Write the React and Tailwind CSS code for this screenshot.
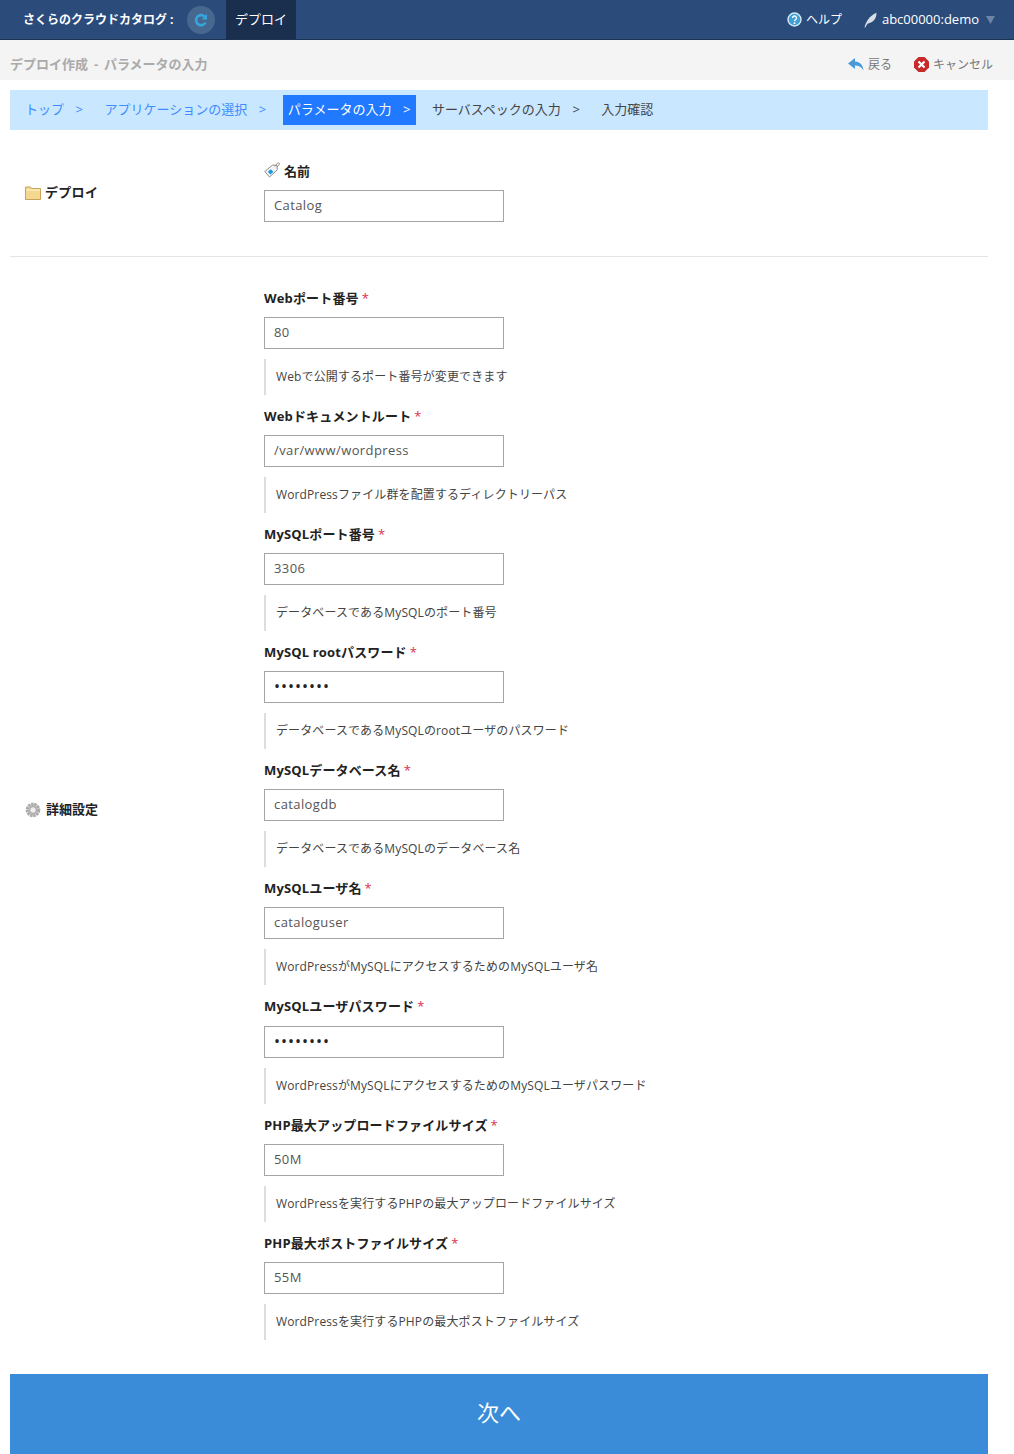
import { useState } from 'react';

const fields = [
  { label: 'Webポート番号', value: '80', help: 'Webで公開するポート番号が変更できます' },
  { label: 'Webドキュメントルート', value: '/var/www/wordpress', help: 'WordPressファイル群を配置するディレクトリーパス' },
  { label: 'MySQLポート番号', value: '3306', help: 'データベースであるMySQLのポート番号' },
  { label: 'MySQL rootパスワード', value: 'password', type: 'password', help: 'データベースであるMySQLのrootユーザのパスワード' },
  { label: 'MySQLデータベース名', value: 'catalogdb', help: 'データベースであるMySQLのデータベース名' },
  { label: 'MySQLユーザ名', value: 'cataloguser', help: 'WordPressがMySQLにアクセスするためのMySQLユーザ名' },
  { label: 'MySQLユーザパスワード', value: 'password', type: 'password', help: 'WordPressがMySQLにアクセスするためのMySQLユーザパスワード' },
  { label: 'PHP最大アップロードファイルサイズ', value: '50M', help: 'WordPressを実行するPHPの最大アップロードファイルサイズ' },
  { label: 'PHP最大ポストファイルサイズ', value: '55M', help: 'WordPressを実行するPHPの最大ポストファイルサイズ' },
];

function Field({ label, value, type = 'text', help }) {
  const [val, setVal] = useState(value);
  return (
    <div className="h-[118.125px]">
      <label className="flex h-[30.125px] items-start pt-[2px] text-[13px] leading-[18px] font-bold tracking-[0.15px] text-[#222]">
        {label}
        <span className="ml-[3px] font-normal text-[#d9304f]">*</span>
      </label>
      <input
        type={type}
        value={val}
        onChange={(e) => setVal(e.target.value)}
        className={`block h-8 w-60 border border-[#a5a5a5] bg-white px-[9px] pb-[2px] outline-none ${
          type === 'password' ? 'text-[16px] tracking-[1px] text-[#222]' : 'text-[13px] tracking-[0.4px] text-[#555]'
        }`}
      />
      <p className="mt-[10px] flex h-9 items-center border-l-2 border-[#ddd] pl-[10px] text-[12px] tracking-[0.12px] text-[#444]">
        {help}
      </p>
    </div>
  );
}

function Crumb({ children, active, link, last }) {
  return (
    <li
      className={`flex h-[30px] items-center px-[5px] ${
        active ? 'bg-[#2079ff] text-white' : link ? 'text-[#3f8bff]' : 'text-[#444]'
      }`}
    >
      {children}
      {!last && <span className="ml-[11px] w-[8.5px] text-center">&gt;</span>}
    </li>
  );
}

export default function App() {
  return (
    <div className="min-h-[1454px] bg-white font-['Open_Sans','Noto_Sans_CJK_JP',sans-serif]">
      {/* top bar */}
      <header className="flex h-10 items-stretch justify-between border-b border-[#1c3353] bg-[#2b4b7b] text-[13px] text-white">
        <div className="flex items-stretch">
          <div className="flex items-center pl-[23px]">
            <span className="w-[164px] text-[12px] font-bold">さくらのクラウドカタログ :</span>
            <span className="flex h-7 w-7 items-center justify-center rounded-full bg-[#47678f]">
              <svg width="16" height="16" viewBox="0 0 16 16" fill="none">
                <path d="M12.5 10.5A5 5 0 1 1 11.5 4.5" stroke="#35a7dc" strokeWidth="2.6" />
                <path d="M14 2v5.5H8.7z" fill="#35a7dc" />
              </svg>
            </span>
          </div>
          <div className="ml-[11px] flex w-[70px] items-center justify-center bg-[#1a2e4e]">デプロイ</div>
        </div>
        <div className="flex items-center pr-[19px]">
          <svg width="15" height="15" viewBox="0 0 15 15">
            <circle cx="7.5" cy="7.5" r="6.5" fill="#3d9fd6" stroke="#d5eaf6" strokeWidth="1.4" />
            <path d="M5.5 6a2 2 0 1 1 3 1.7c-.7.4-1 .8-1 1.6" fill="none" stroke="#fff" strokeWidth="1.4" />
            <circle cx="7.5" cy="11.2" r="0.9" fill="#fff" />
          </svg>
          <span className="ml-1 text-[12px]">ヘルプ</span>
          <svg className="ml-[21px]" width="14" height="16" viewBox="0 0 14 16">
            <path d="M1.5 15.5C3 10 6 4 13.5 .8 13.5 5 12 10 5 11.5 4 12.5 3 14 2.3 15.5z" fill="#d8dee6" />
          </svg>
          <span className="ml-[5px]">abc00000:demo</span>
          <svg className="ml-[7px]" width="9" height="8" viewBox="0 0 9 8">
            <path d="M0 0h9L4.5 8z" fill="#6d84a6" />
          </svg>
        </div>
      </header>

      {/* page title */}
      <div className="flex h-10 items-center justify-between bg-[#f4f4f4] pl-[10px] pr-[21px] pt-[9px]">
        <h1 className="text-[13px] font-bold [word-spacing:2.5px] text-[#aaa]">デプロイ作成 - パラメータの入力</h1>
        <div className="flex items-center text-[12px] text-[#777]">
          <svg width="16" height="13" viewBox="0 0 16 13">
            <path d="M7 0 0 5.5 7 11V7.5c4 0 6.5 1.5 8.5 5C15 7 12 3.5 7 3.5z" fill="#4a9ad9" />
          </svg>
          <span className="ml-[4px]">戻る</span>
          <svg className="ml-[22px]" width="15" height="15" viewBox="0 0 15 15">
            <path d="M4.5 0h6L15 4.5v6L10.5 15h-6L0 10.5v-6z" fill="#c62a2a" />
            <path d="M4.5 4.5l6 6m0-6l-6 6" stroke="#fff" strokeWidth="2.2" />
          </svg>
          <span className="ml-[4px]">キャンセル</span>
        </div>
      </div>

      <main className="px-[10px] pt-[10px]">
        {/* steps */}
        <ol className="flex h-10 w-[978px] items-center gap-[11px] bg-[#c9e7ff] pl-[10px] text-[13px]">
          <Crumb link>トップ</Crumb>
          <Crumb link>アプリケーションの選択</Crumb>
          <Crumb active>パラメータの入力</Crumb>
          <Crumb>サーバスペックの入力</Crumb>
          <Crumb last>入力確認</Crumb>
        </ol>

        {/* deploy name */}
        <section className="flex h-[127px] w-[978px] items-center border-b border-[#e5e5e5]">
          <div className="flex w-[254px] items-center pl-[15px] text-[13px] font-bold tracking-[0.3px] text-[#222]">
            <svg width="16" height="14" viewBox="0 0 16 14">
              <path d="M.5 1h5l1 1.5h9v11H.5z" fill="#f4d88f" stroke="#c9a35c" />
              <path d="M1 4h14" stroke="#fff3cf" />
            </svg>
            <span className="ml-[4px]">デプロイ</span>
          </div>
          <div className="pb-[2px]">
            <label className="flex h-[27px] items-start text-[13px] leading-[16px] font-bold text-[#222]">
              <svg className="mr-[4px] mt-[-1px]" width="16" height="16" viewBox="0 0 16 16">
                <path d="M.8 9.5 8.5 3l4.5.5.3 4.3L5.5 15z" fill="#f2f4f5" stroke="#8f8f8f" />
                <path d="M3.8 9.8l3-2.6 2.6 2.6-3 2.6z" fill="#1f97dc" />
                <path d="M11 4.5c1-2 2.5-4 4-3.5s0 2.500-2 3.500" fill="none" stroke="#a08f7e" />
              </svg>
              名前
            </label>
            <input
              defaultValue="Catalog"
              className="block h-8 w-60 border border-[#a5a5a5] bg-white px-[9px] pb-[2px] text-[13px] tracking-[0.4px] text-[#555] outline-none"
            />
          </div>
        </section>

        {/* detail settings */}
        <section className="flex h-[1106px] w-[978px] items-center">
          <div className="flex w-[254px] items-center pl-[15px] text-[13px] font-bold text-[#222]">
            <svg width="16" height="16" viewBox="0 0 16 16">
              <circle cx="8" cy="8" r="5.8" fill="#d0d0d0" stroke="#aaa" strokeWidth="3" strokeDasharray="2.4 0.7" />
              <circle cx="8" cy="8" r="3.4" fill="#eee" stroke="#999" />
            </svg>
            <span className="ml-[5px]">詳細設定</span>
          </div>
          <div className="self-start pt-[29.675px]">
            {fields.map((f) => (
              <Field key={f.label} {...f} />
            ))}
          </div>
        </section>

        <button className="mt-[11px] block h-20 w-[978px] bg-[#3a8cd8] pb-[4px] text-[22px] text-white">次へ</button>
      </main>
    </div>
  );
}
